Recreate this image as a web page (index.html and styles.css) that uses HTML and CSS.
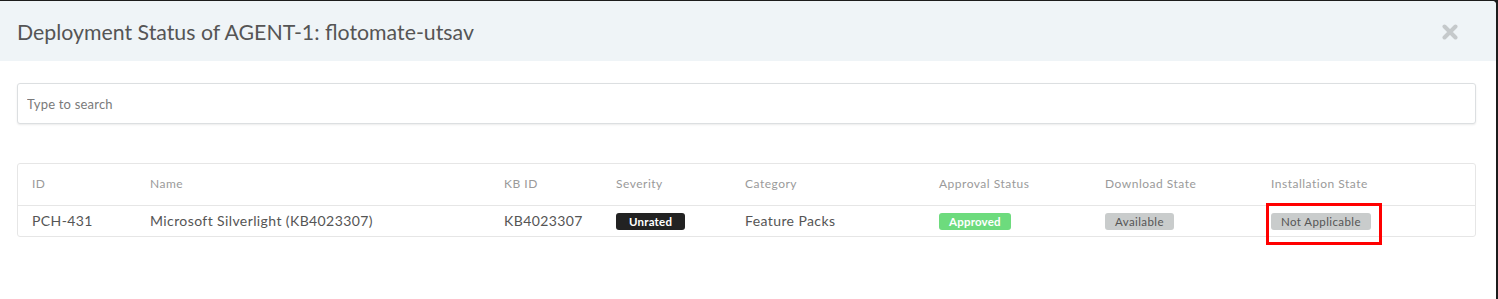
FILE: index.html
```html
<!DOCTYPE html>
<html>
<head>
    <meta charset="UTF-8">
    <title>Deployment Status</title>
    <link rel="stylesheet" href="styles.css">
</head>
<body>
<div class="modal">
    <div class="modal-header">
        <h2 class="modal-title">Deployment Status of AGENT-1: flotomate-utsav</h2>
        <svg class="close" width="16" height="16" viewBox="0 0 16 16">
            <path d="M2.5 2.5 L13.5 13.5 M13.5 2.5 L2.5 13.5" stroke="#c5c9cb" stroke-width="4" stroke-linecap="round"/>
        </svg>
    </div>
    <div class="modal-body">
        <input class="search" type="text" placeholder="Type to search">
        <div class="grid">
            <table>
                <colgroup>
                    <col style="width:118px">
                    <col style="width:354px">
                    <col style="width:112px">
                    <col style="width:129px">
                    <col style="width:194px">
                    <col style="width:166px">
                    <col style="width:166px">
                    <col>
                </colgroup>
                <thead>
                <tr>
                    <th>ID</th>
                    <th>Name</th>
                    <th>KB ID</th>
                    <th>Severity</th>
                    <th>Category</th>
                    <th>Approval Status</th>
                    <th>Download State</th>
                    <th>Installation State</th>
                </tr>
                </thead>
                <tbody>
                <tr>
                    <td>PCH-431</td>
                    <td>Microsoft Silverlight (KB4023307)</td>
                    <td>KB4023307</td>
                    <td><span class="tag tag-dark">Unrated</span></td>
                    <td>Feature Packs</td>
                    <td><span class="tag tag-green">Approved</span></td>
                    <td><span class="tag tag-grey">Available</span></td>
                    <td><span class="tag tag-grey marked">Not Applicable</span></td>
                </tr>
                </tbody>
            </table>
        </div>
    </div>
</div>
</body>
</html>
```

FILE: styles.css
```css
* {
    margin: 0;
    padding: 0;
    box-sizing: border-box;
}

html, body {
    width: 100%;
    height: 100%;
    overflow: hidden;
}

body {
    background: #1c1c1c;
    font-family: Lato, "Liberation Sans", sans-serif;
    color: #555;
}

.modal {
    margin-top: 1px;
    width: 1496px;
    height: 298px;
    background: #fff;
    border-radius: 0 4px 0 0;
    overflow: hidden;
}

.modal-header {
    display: flex;
    align-items: center;
    justify-content: space-between;
    height: 60px;
    padding: 0 38px 0 17px;
    background: #eff4f7;
}

.modal-title {
    font-weight: normal;
    font-size: 21.3px;
    color: #555;
    padding-top: 1px;
}

.close {
    display: block;
    margin-top: 1px;
}

.modal-body {
    padding: 22px 20px 0 17px;
}

.search {
    display: block;
    width: 100%;
    height: 41px;
    padding: 0 9px;
    border: 1px solid #dcdfe1;
    border-radius: 3px;
    box-shadow: 0 1px 2px rgba(0, 0, 0, 0.08);
    font-family: inherit;
    font-size: 13px;
    letter-spacing: 0.2px;
    color: #555;
    outline: none;
}

.search::placeholder {
    color: #7a7a7a;
}

.grid {
    margin-top: 39px;
    border: 1px solid #e6e6e6;
    border-radius: 3px;
}

table {
    width: 100%;
    border-collapse: collapse;
    table-layout: fixed;
}

th {
    height: 41px;
    padding: 0 0 1px 14px;
    text-align: left;
    font-weight: normal;
    font-size: 12px;
    letter-spacing: 0.5px;
    color: #9a9a9a;
    border-bottom: 1px solid #e6e6e6;
}

td {
    height: 31px;
    padding: 0 0 1px 14px;
    font-size: 14px;
    letter-spacing: 0.4px;
    color: #555;
    white-space: nowrap;
}

.tag {
    display: inline-block;
    position: relative;
    padding: 2px 10px;
    border-radius: 3px;
    font-size: 11.5px;
    line-height: 13px;
    vertical-align: middle;
}

.tag-dark {
    background: #222;
    color: #fff;
    padding: 2px 13px;
    font-weight: bold;
    letter-spacing: 0.2px;
}

.tag-green {
    background: #6ddb7d;
    color: #fff;
    font-weight: bold;
    letter-spacing: 0.2px;
}

.tag-grey {
    background: #c9cccc;
    color: #555;
    letter-spacing: 0.4px;
}

.marked::after {
    content: "";
    position: absolute;
    left: -5px;
    top: -10px;
    width: 110px;
    height: 36px;
    border: 3px solid #f00;
}
```
